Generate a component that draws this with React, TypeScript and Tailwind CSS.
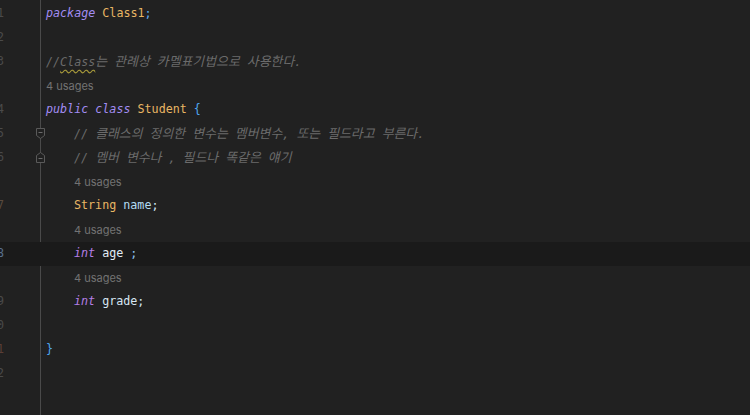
import React from "react";

const mono = { fontFamily: '"DejaVu Sans Mono", "Noto Sans CJK KR", monospace' };

function Ko({ text }: { text: string }) {
  const parts = text.split(/([\uAC00-\uD7A3]+)/);
  return (
    <>
      {parts.map((p, i) =>
        /[\uAC00-\uD7A3]/.test(p) ? (
          <span key={i} className="text-[12.9px]" style={{ fontFamily: '"Noto Sans CJK KR", sans-serif' }}>
            {p}
          </span>
        ) : (
          <span key={i}>{p}</span>
        )
      )}
    </>
  );
}

type Row = {
  num?: string;
  numColor?: string;
  kind: "code" | "usage" | "empty";
  indent?: number;
  content?: React.ReactNode;
  highlight?: boolean;
  fold?: "start" | "end";
};

const K = ({ children, c = "text-[#a38df4]" }: { children: React.ReactNode; c?: string }) => (
  <span className={`italic ${c}`}>{children}</span>
);
const T = ({ children }: { children: React.ReactNode }) => <span className="text-[#e8b664]">{children}</span>;
const C = ({ children }: { children: React.ReactNode }) => <span className="italic text-[#6b6b6b]">{children}</span>;

const rows: Row[] = [
  { num: "1", kind: "code", content: (<><K>package</K> <T>Class1</T><span className="text-[#5fa8ee]">;</span></>) },
  { num: "2", kind: "empty" },
  {
    num: "3",
    kind: "code",
    content: (
      <C>
        //<span className="underline decoration-wavy decoration-[#a89a3a] underline-offset-[3px]">Class</span>
        <Ko text="는 관례상 카멜표기법으로 사용한다." />
      </C>
    ),
  },
  { kind: "usage", indent: 0 },
  { num: "4", kind: "code", content: (<><K>public</K> <K>class</K> <T>Student</T> <span className="text-[#4ea6f0]">{"{"}</span></>) },
  { num: "5", kind: "code", indent: 4, fold: "start", content: <C><Ko text="// 클래스의 정의한 변수는 멤버변수, 또는 필드라고 부른다." /></C> },
  { num: "6", kind: "code", indent: 4, fold: "end", content: <C><Ko text="// 멤버 변수나 , 필드나 똑같은 얘기" /></C> },
  { kind: "usage", indent: 4 },
  { num: "7", numColor: "text-[#5a4a3e]", kind: "code", indent: 4, content: (<><T>String</T> <span className="text-[#b3dcf2]">name</span><span className="text-[#cfe4f5]">;</span></>) },
  { kind: "usage", indent: 4 },
  { num: "8", numColor: "text-[#58708f]", kind: "code", indent: 4, highlight: true, content: (<><K c="text-[#b57fe6]">int</K> <span className="text-[#e2ecf5]">age</span> <span className="text-[#8fc3f0]">;</span></>) },
  { kind: "usage", indent: 4 },
  { num: "9", kind: "code", indent: 4, content: (<><K c="text-[#b57fe6]">int</K> <span className="text-[#d6e6f3]">grade</span><span className="text-[#cfe4f5]">;</span></>) },
  { num: "10", kind: "empty" },
  { num: "11", numColor: "text-[#5a3e36]", kind: "code", content: <span className="text-[#4ea6f0]">{"}"}</span> },
  { num: "12", kind: "empty" },
  { kind: "empty" },
];

function FoldMark({ type }: { type: "start" | "end" }) {
  return (
    <svg width="11" height="13" viewBox="0 0 11 13" className="absolute left-[35px] top-[5px]">
      {type === "start" ? (
        <path d="M1.5 1.5 H9.5 V8.5 L5.5 11.5 L1.5 8.5 Z" fill="#212121" stroke="#5a5a5a" strokeWidth="1" />
      ) : (
        <path d="M1.5 11.5 H9.5 V4.5 L5.5 1.5 L1.5 4.5 Z" fill="#212121" stroke="#5a5a5a" strokeWidth="1" />
      )}
      <path d={type === "start" ? "M3.5 5.5 H7.5" : "M3.5 7.5 H7.5"} stroke="#6a6a6a" strokeWidth="1" />
    </svg>
  );
}

export default function App() {
  return (
    <div className="w-[750px] h-[415px] bg-[#212121] overflow-hidden flex">
      <div className="relative flex flex-col pt-[2px] w-full">
        <div className="absolute left-[40px] top-0 bottom-0 w-px bg-[#4a4a4a]" />
        {rows.map((r, i) => (
          <div key={i} className={`relative flex items-center h-[24px] shrink-0 ${r.highlight ? "bg-[#1a1a1a]" : ""}`}>
            <div className="w-[46px] h-full flex items-center overflow-hidden shrink-0">
              {r.num && (
                <span
                  className={`block text-[11.7px] text-right w-[14px] ml-[-10px] ${r.numColor ?? "text-[#4a4a4a]"}`}
                  style={mono}
                >
                  {r.num.slice(-1)}
                </span>
              )}
            </div>
            {r.fold && <FoldMark type={r.fold} />}
            {r.kind === "code" && (
              <div
                className={`text-[11.7px] leading-none whitespace-pre text-[#cccccc] ${r.indent ? "pl-[28px]" : ""}`}
                style={mono}
              >
                {r.content}
              </div>
            )}
            {r.kind === "usage" && (
              <div
                className={`text-[11px] text-[#737373] ${r.indent ? "pl-[28px]" : ""}`}
                style={{ fontFamily: 'Inter, "Noto Sans", sans-serif' }}
              >
                4 usages
              </div>
            )}
          </div>
        ))}
      </div>
    </div>
  );
}
